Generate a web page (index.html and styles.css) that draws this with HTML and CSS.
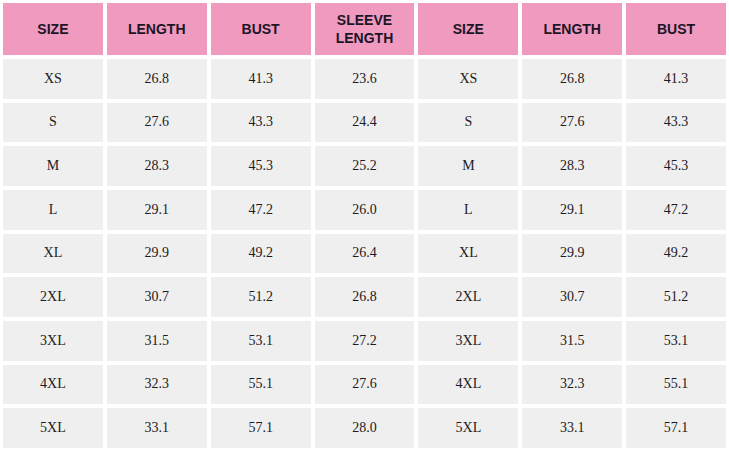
FILE: index.html
```html
<!DOCTYPE html>
<html>
<head>
<meta charset="utf-8">
<link rel="stylesheet" href="styles.css">
</head>
<body>
<div class="chart">
  <div class="h">SIZE</div><div class="h">LENGTH</div><div class="h">BUST</div><div class="h">SLEEVE<br>LENGTH</div><div class="h">SIZE</div><div class="h">LENGTH</div><div class="h">BUST</div>
  <div class="c">XS</div><div class="c">26.8</div><div class="c">41.3</div><div class="c">23.6</div><div class="c">XS</div><div class="c">26.8</div><div class="c">41.3</div>
  <div class="c">S</div><div class="c">27.6</div><div class="c">43.3</div><div class="c">24.4</div><div class="c">S</div><div class="c">27.6</div><div class="c">43.3</div>
  <div class="c">M</div><div class="c">28.3</div><div class="c">45.3</div><div class="c">25.2</div><div class="c">M</div><div class="c">28.3</div><div class="c">45.3</div>
  <div class="c">L</div><div class="c">29.1</div><div class="c">47.2</div><div class="c">26.0</div><div class="c">L</div><div class="c">29.1</div><div class="c">47.2</div>
  <div class="c">XL</div><div class="c">29.9</div><div class="c">49.2</div><div class="c">26.4</div><div class="c">XL</div><div class="c">29.9</div><div class="c">49.2</div>
  <div class="c">2XL</div><div class="c">30.7</div><div class="c">51.2</div><div class="c">26.8</div><div class="c">2XL</div><div class="c">30.7</div><div class="c">51.2</div>
  <div class="c">3XL</div><div class="c">31.5</div><div class="c">53.1</div><div class="c">27.2</div><div class="c">3XL</div><div class="c">31.5</div><div class="c">53.1</div>
  <div class="c">4XL</div><div class="c">32.3</div><div class="c">55.1</div><div class="c">27.6</div><div class="c">4XL</div><div class="c">32.3</div><div class="c">55.1</div>
  <div class="c">5XL</div><div class="c">33.1</div><div class="c">57.1</div><div class="c">28.0</div><div class="c">5XL</div><div class="c">33.1</div><div class="c">57.1</div>
</div>
</body>
</html>
```
FILE: styles.css
```css
html, body {
  margin: 0;
  padding: 0;
  background: #ffffff;
}
.chart {
  box-sizing: border-box;
  width: 729px;
  height: 453px;
  padding: 3px 3px 5px 3px;
  display: grid;
  grid-template-columns: repeat(7, 1fr);
  grid-template-rows: 52px repeat(9, 1fr);
  gap: 4px;
}
.h {
  background: #f09ac0;
  color: #1b1626;
  font-family: "Liberation Sans", Arial, sans-serif;
  font-weight: bold;
  font-size: 14px;
  line-height: 18px;
  display: flex;
  align-items: center;
  justify-content: center;
  text-align: center;
}
.c {
  background: #efefef;
  color: #1d1a22;
  font-family: "Liberation Serif", "Times New Roman", serif;
  font-size: 14px;
  display: flex;
  align-items: center;
  justify-content: center;
}
```
